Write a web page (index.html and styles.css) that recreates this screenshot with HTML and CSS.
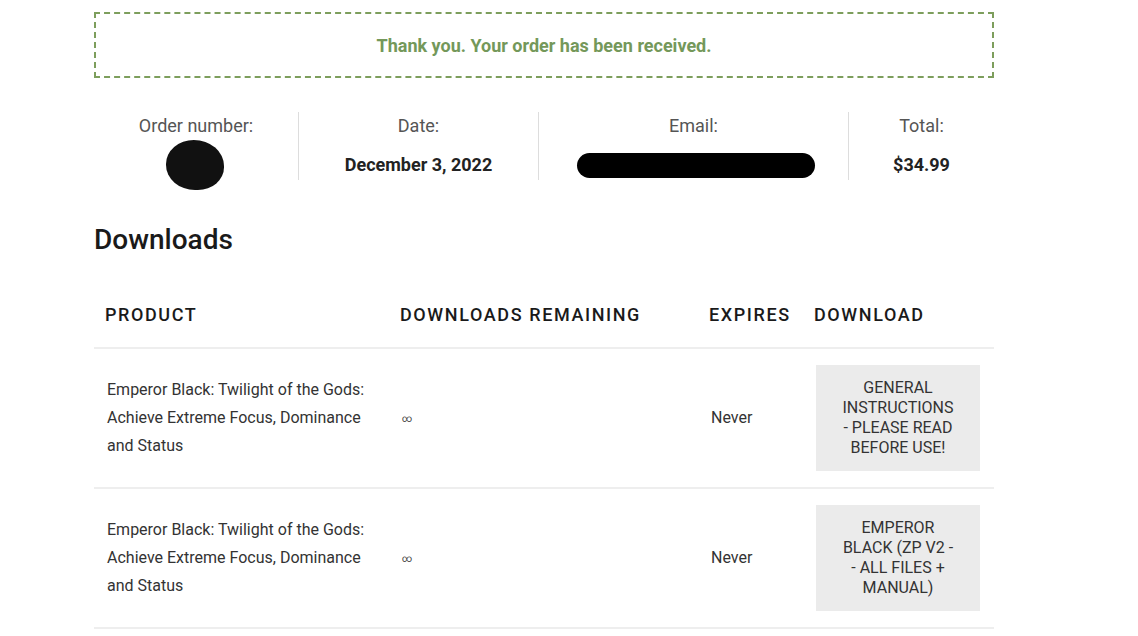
FILE: index.html
```html
<!DOCTYPE html>
<html lang="en">
<head>
    <meta charset="UTF-8">
    <meta name="viewport" content="width=device-width, initial-scale=1.0">
    <title>Order received</title>
    <link rel="stylesheet" href="styles.css">
</head>
<body>
    <div class="order-page">
        <p class="notice">Thank you. Your order has been received.</p>

        <ul class="overview">
            <li class="overview-item item-number">
                Order number:
                <strong><span class="blot-round"></span></strong>
            </li>
            <li class="overview-item item-date">
                Date:
                <strong>December 3, 2022</strong>
            </li>
            <li class="overview-item item-email">
                Email:
                <strong><span class="blot-bar"></span></strong>
            </li>
            <li class="overview-item item-total">
                Total:
                <strong>$34.99</strong>
            </li>
        </ul>

        <h2 class="section-title">Downloads</h2>

        <table class="downloads">
            <colgroup>
                <col class="col-product">
                <col class="col-remaining">
                <col class="col-expires">
                <col class="col-file">
            </colgroup>
            <thead>
                <tr>
                    <th>Product</th>
                    <th>Downloads remaining</th>
                    <th>Expires</th>
                    <th>Download</th>
                </tr>
            </thead>
            <tbody>
                <tr>
                    <td>Emperor Black: Twilight of the Gods: Achieve Extreme Focus, Dominance and Status</td>
                    <td><span class="infinite">&infin;</span></td>
                    <td class="expires">Never</td>
                    <td><a class="file-button" href="#">General Instructions - Please read before use!</a></td>
                </tr>
                <tr>
                    <td>Emperor Black: Twilight of the Gods: Achieve Extreme Focus, Dominance and Status</td>
                    <td><span class="infinite">&infin;</span></td>
                    <td class="expires">Never</td>
                    <td><a class="file-button" href="#">Emperor Black (ZP V2 - - All files + Manual)</a></td>
                </tr>
            </tbody>
        </table>
    </div>
</body>
</html>
```

FILE: styles.css
```css
body {
    margin: 0;
    background: #fff;
    color: #333;
    font-family: Roboto, "Liberation Sans", sans-serif;
}
.order-page {
    width: 900px;
    margin-left: 94px;
    padding-top: 12px;
}
.notice {
    margin: 0;
    height: 62px;
    border: 2px dashed #7d9e5c;
    display: flex;
    align-items: center;
    justify-content: center;
    color: #74985a;
    font-size: 18px;
    font-weight: 700;
}
.overview {
    list-style: none;
    margin: 34px 0 0;
    padding: 0;
    display: flex;
}
.overview-item {
    display: flex;
    flex-direction: column;
    align-items: center;
    height: 68px;
    font-size: 18px;
    color: #555;
    border-right: 1px solid #ddd;
    padding-top: 3px;
    box-sizing: border-box;
}
.overview-item strong {
    margin-top: 17px;
    color: #222;
    font-weight: 700;
    height: 22px;
    display: flex;
    align-items: center;
}
.item-number { width: 205px; }
.item-date { width: 240px; }
.item-email { width: 310px; }
.item-total { width: 145px; border-right: none; }
.blot-round {
    display: block;
    width: 58px;
    height: 50px;
    margin-top: 1px;
    margin-left: -2px;
    background: #111;
    border-radius: 48% 52% 45% 50%;
}
.blot-bar {
    display: block;
    width: 238px;
    height: 25px;
    margin-top: 2px;
    margin-left: 4px;
    background: #000;
    border-radius: 13px;
}
.section-title {
    margin: 43px 0 0;
    font-size: 28px;
    font-weight: 500;
    color: #1a1a1a;
}
.downloads {
    width: 900px;
    margin-top: 48px;
    border-collapse: collapse;
    table-layout: fixed;
}
.col-product { width: 295px; }
.col-remaining { width: 309px; }
.col-expires { width: 105px; }
.col-file { width: 191px; }
.downloads th {
    text-align: left;
    padding: 0 11px 22px;
    font-size: 18px;
    font-weight: 500;
    letter-spacing: 1.6px;
    text-transform: uppercase;
    color: #1a1a1a;
    border-bottom: 2px solid #eee;
}
.downloads td {
    padding: 16px 13px;
    font-size: 16px;
    line-height: 28px;
    color: #333;
    border-bottom: 2px solid #eee;
    vertical-align: middle;
}
.infinite {
    font-size: 10px;
    color: #444;
}
.file-button {
    display: block;
    width: 164px;
    box-sizing: border-box;
    padding: 13px 25px;
    background: #ebebeb;
    color: #333;
    text-align: center;
    text-transform: uppercase;
    text-decoration: none;
    line-height: 20px;
}
```
